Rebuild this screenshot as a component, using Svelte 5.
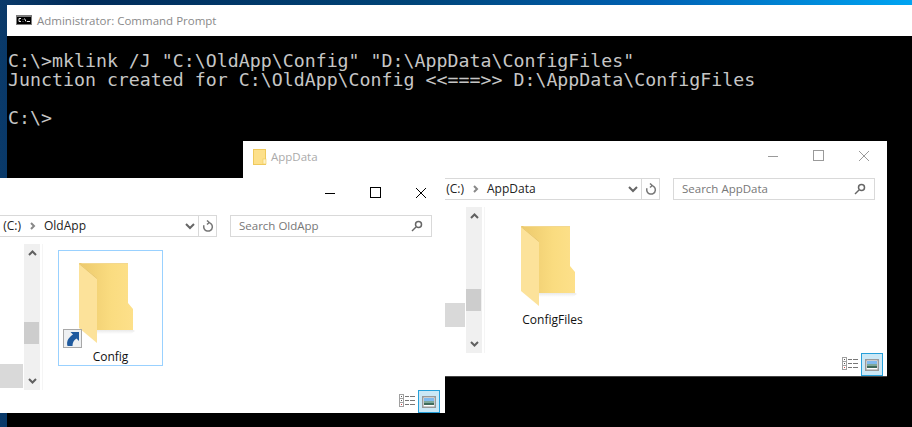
<script>
  const windows = [
    { name: 'OldApp', cls: 'front', item: 'Config', link: true, thumb: 66, sel: 120 },
    { name: 'AppData', cls: 'back', item: 'ConfigFiles', link: false, thumb: 70, sel: 96 }
  ];
</script>

{#snippet folder(link)}
  <svg class="folder" width="56" height="84" viewBox="0 0 56 84">
    <defs>
      <linearGradient id="back{link}" x1="0" x2="1" y1="0" y2="0">
        <stop offset="0" stop-color="#ecc96c" />
        <stop offset=".6" stop-color="#fadc80" />
        <stop offset="1" stop-color="#fde08a" />
      </linearGradient>
      <linearGradient id="fade{link}" x1="0" x2="0" y1="0" y2="1">
        <stop offset="0" stop-color="#e4e4e4" />
        <stop offset="1" stop-color="#fff" />
      </linearGradient>
    </defs>
    <path d="M18 68h36l2 1-4 3H18z" fill="url(#fade{link})" opacity=".8" />
    <path d="M0 1h49v40l5 6v21H18V20z" fill="url(#back{link})" />
    <path d="M2 1h47v1H3z" fill="#f3d88f" />
    <path d="M0 1l18 15v65L0 66z" fill="#fce29a" />
    <path d="M0 1l18 15v1L0 2z" fill="#e6c468" />
  </svg>
{/snippet}

<main class="desktop">
  <section class="console">
    <header class="console-title">
      <svg width="16" height="10" viewBox="0 0 16 10">
        <rect width="16" height="10" fill="#7b7b7b" />
        <rect x="1" y="2" width="14" height="7" fill="#000" />
        <path d="M5 3.500H3v3h2M7 4v.5M7 6v.5M8.500 3.500l1.500 3M11 6.500h3" fill="none" stroke="#eee" />
      </svg>
      <span>Administrator: Command Prompt</span>
    </header>
    <pre>C:\&gt;mklink /J "C:\OldApp\Config" "D:\AppData\ConfigFiles"
Junction created for C:\OldApp\Config &lt;&lt;===&gt;&gt; D:\AppData\ConfigFiles

C:\&gt;</pre>
  </section>

  {#each [windows[1], windows[0]] as w}
    <section class="win {w.cls}">
      <header class="titlebar">
        {#if !w.link}
          <svg class="title-icon" width="14" height="16" viewBox="0 0 14 16">
            <rect x=".5" y=".5" width="12" height="15" fill="#fde08a" stroke="#efc95c" />
            <rect x="10" y="10" width="3" height="5" fill="#fff2c4" stroke="#efc95c" stroke-width=".6" />
          </svg>
          <span class="title">{w.name}</span>
        {/if}
        <div class="caption">
          <svg width="14" height="14" viewBox="0 0 14 14"><path d="M1 7.500h10" /></svg>
          <svg width="14" height="14" viewBox="0 0 14 14"><rect x="1.500" y="1.500" width="10" height="10" /></svg>
          <svg width="14" height="14" viewBox="0 0 14 14"><path d="M2 2l10 10M12 2L2 12" /></svg>
        </div>
      </header>

      <div class="toolbar">
        <div class="address">
          <span class="disk">(C:)</span>
          <svg class="sep" width="6" height="8" viewBox="0 0 6 8"><path d="M1 1l3 3-3 3" /></svg>
          <span class="crumb">{w.name}</span>
          <svg class="drop" width="10" height="7" viewBox="0 0 10 7"><path d="M1 1l4 4 4-4" /></svg>
          <span class="refresh">
            <svg width="12" height="13" viewBox="0 0 12 13"><path d="M6 2.500a4.300 4.300 0 1 1-4 2.800M5 .5l2.200 2L5 4.500" /></svg>
          </span>
        </div>
        <div class="search">
          <span>Search {w.name}</span>
          <svg width="12" height="12" viewBox="0 0 12 12"><circle cx="7.500" cy="4.500" r="3" /><path d="M5 7l-4 4" /></svg>
        </div>
      </div>

      <div class="body">
        <div class="tree">
          <div class="tree-sel" style="margin-top: {w.sel}px"></div>
        </div>
        <div class="scroll">
          <svg class="arrow" width="9" height="6" viewBox="0 0 9 6"><path d="M1 5l3.500-3.500L8 5" /></svg>
          <div class="thumb" style="margin-top: {w.thumb}px"></div>
          <svg class="arrow down" width="9" height="6" viewBox="0 0 9 6"><path d="M1 1l3.500 3.500L8 1" /></svg>
        </div>
        <div class="pane">
          <div class="item" class:selected={w.link}>
            <div class="icon-wrap">
              {@render folder(w.link)}
              {#if w.link}
                <svg class="link" width="19" height="19" viewBox="0 0 19 19">
                  <rect x=".5" y=".5" width="18" height="18" fill="#eef0f2" stroke="#a8a8a8" />
                  <path d="M7.500 3H16v9l-2.500-2.500C10.500 11 9.500 14 9.500 17H4.500C3 12 6 8 10 5.500z" fill="#1f5a9e" />
                </svg>
              {/if}
            </div>
            <span class="label">{w.item}</span>
          </div>
        </div>
      </div>

      <footer class="status">
        <svg width="16" height="13" viewBox="0 0 16 13">
          <rect x=".5" y=".5" width="4" height="12" fill="#fff" stroke="#a0a0a0" />
          <path d="M.5 4.500h4M.5 8.500h4" stroke="#a0a0a0" />
          <path d="M2 2.500h1M2 6.500h1" stroke="#555" />
          <path d="M2 10.500h1" stroke="#d04040" />
          <path d="M6 2.500h4M11 2.500h5M6 6.500h4M11 6.500h5M6 10.500h4M11 10.500h5" stroke="#777" />
        </svg>
        <span class="view-on">
          <svg width="14" height="12" viewBox="0 0 14 12">
            <rect x=".75" y=".75" width="12.500" height="10.500" fill="#fff" stroke="#999" stroke-width="1.500" />
            <rect x="2" y="2" width="10" height="3" fill="#7fb9ee" />
            <rect x="2" y="5" width="10" height="2" fill="#7ea89a" />
            <rect x="2" y="7" width="10" height="2" fill="#3f6a5a" />
          </svg>
        </span>
      </footer>
    </section>
  {/each}
</main>

<style>
  :global(body) { margin: 0; }
  .desktop {
    position: relative;
    width: 912px;
    height: 427px;
    overflow: hidden;
    background: linear-gradient(90deg, #0a3a6a, #012c5a 9%, #004478 45%, #0062b4 72%, #00a4f2 100%);
    font-family: "Open Sans", "Noto Sans", sans-serif;
  }
  .console {
    position: absolute;
    left: 7px;
    top: 5px;
    width: 905px;
    height: 422px;
    background: #000;
  }
  .console-title {
    height: 31px;
    background: #fff;
    display: flex;
    align-items: center;
    gap: 5px;
    padding-left: 9px;
    font-size: 11.5px;
    color: #8a8a8a;
  }
  .console-title svg { margin-top: -1px; }
  pre {
    margin: 15px 0 0 1px;
    font-family: "DejaVu Sans Mono", monospace;
    font-size: 18.25px;
    line-height: 19px;
    color: #c6c6c6;
  }

  .win {
    position: absolute;
    width: 644px;
    background: #fff;
    box-sizing: border-box;
    display: flex;
    flex-direction: column;
    font-size: 12px;
  }
  .win.back { left: 243px; top: 141px; height: 236px; border-bottom: 1px solid #444; }
  .win.front { left: -199px; top: 178px; height: 235px; }

  .titlebar {
    height: 31px;
    display: flex;
    align-items: center;
    padding-left: 10px;
    flex: none;
  }
  .title { margin-left: 4px; color: #aaa; font-size: 11.5px; }
  .caption {
    margin-left: auto;
    align-self: flex-start;
    margin-top: 8px;
    display: flex;
    gap: 31px;
    padding-right: 16px;
  }
  .front .caption { padding-right: 17px; }
  .caption svg { fill: none; stroke: #9a9a9a; stroke-width: 1; }
  .front .caption svg { stroke: #000; }

  .toolbar {
    display: flex;
    height: 22px;
    margin: 6px 0 0 99px;
    gap: 13px;
    flex: none;
  }
  .front .toolbar { margin-left: 98px; }
  .address, .search {
    box-sizing: border-box;
    border: 1px solid #d9d9d9;
    display: flex;
    align-items: center;
    color: #222;
  }
  .address { width: 318px; }
  .disk { width: 121px; text-align: right; white-space: nowrap; flex: none; }
  .disk, .crumb, .search span { margin-top: -2px; }
  .sep { margin-left: 9px; fill: none; stroke: #888; stroke-width: 2; }
  .crumb { margin-left: 8px; }
  .drop { margin-left: auto; margin-right: 3px; fill: none; stroke: #666; stroke-width: 2; }
  .refresh {
    width: 17px;
    height: 100%;
    border-left: 1px solid #d9d9d9;
    display: flex;
    align-items: center;
    justify-content: center;
  }
  .refresh svg { fill: none; stroke: #777; stroke-width: 1.5; }
  .search {
    width: 202px;
    justify-content: space-between;
    padding: 0 8px;
    color: #777;
    font-size: 11.5px;
  }
  .search svg { fill: none; stroke: #666; stroke-width: 1.5; }

  .body {
    display: flex;
    height: 146px;
    margin-top: 7px;
    flex: none;
  }
  .tree { width: 223px; }
  .tree-sel { width: 23px; height: 24px; margin-left: 199px; background: #d9d9d9; }
  .scroll {
    width: 16px;
    background: #f0f0f0;
    display: flex;
    flex-direction: column;
    align-items: center;
    padding-top: 6px;
    box-sizing: border-box;
    position: relative;
  }
  .arrow { fill: none; stroke: #606060; stroke-width: 2; flex: none; }
  .arrow.down { position: absolute; bottom: 6px; }
  .thumb { width: 15px; height: 22px; background: #cdcdcd; align-self: flex-start; flex: none; }
  .pane {
    flex: 1;
    border-left: 1px solid #f5f5f5;
    margin-left: 2px;
    padding: 6px 0 0 15px;
  }
  .item {
    width: 105px;
    height: 116px;
    box-sizing: border-box;
    display: flex;
    flex-direction: column;
    align-items: center;
    padding-top: 11px;
    border: 1px solid transparent;
  }
  .item.selected { border-color: #99d1ff; }
  .icon-wrap { position: relative; height: 84px; width: 56px; margin-right: 8px; }
  .folder { display: block; }
  .link { position: absolute; left: -16px; bottom: -2px; }
  .label { color: #111; margin-top: 2px; white-space: nowrap; }

  .status {
    flex: 1;
    display: flex;
    justify-content: flex-end;
    align-items: flex-end;
    padding-right: 4px;
    gap: 3px;
  }
  .front .status { padding-right: 5px; }
  .status > svg { margin-bottom: 6px; fill: none; }
  .view-on {
    width: 22px;
    height: 23px;
    box-sizing: border-box;
    border: 1px solid #26a0da;
    background: #cbe8f6;
    display: flex;
    align-items: center;
    justify-content: center;
  }
</style>
